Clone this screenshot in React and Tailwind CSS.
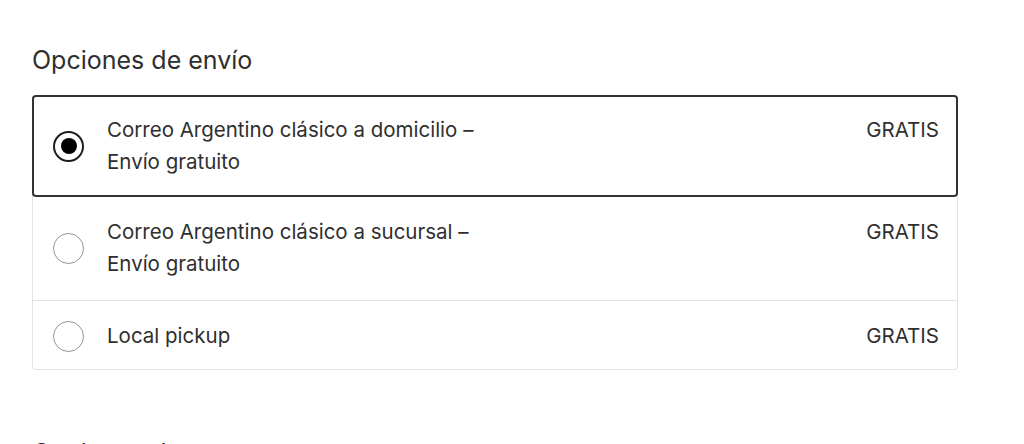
const options = [
  { id: "domicilio", label: "Correo Argentino clásico a domicilio –", sub: "Envío gratuito", price: "GRATIS" },
  { id: "sucursal", label: "Correo Argentino clásico a sucursal –", sub: "Envío gratuito", price: "GRATIS" },
  { id: "pickup", label: "Local pickup", price: "GRATIS" },
];

function Radio({ checked }) {
  if (checked) {
    return (
      <span className="flex h-[31px] w-[31px] shrink-0 items-center justify-center rounded-full border-2 border-[#1e1e1e]">
        <span className="h-4 w-4 rounded-full bg-black" />
      </span>
    );
  }
  return <span className="h-[31px] w-[31px] shrink-0 rounded-full border border-[#949494]" />;
}

// padding per row is tuned so text sits where the reference has it
function Row({ opt, checked, className }) {
  return (
    <label className={"flex items-start " + className}>
      <span className={opt.sub ? "flex h-[64px] items-center" : "flex h-[32px] items-center"}>
        <Radio checked={checked} />
      </span>
      <span className="ml-[23px] flex-1 text-[#2f2f2f]">
        <span className="block">{opt.label}</span>
        {opt.sub && <span className="block">{opt.sub}</span>}
      </span>
      <span className="text-[#2f2f2f]">{opt.price}</span>
    </label>
  );
}

export default function App() {
  const selected = "domicilio";
  return (
    <div className="h-[444px] overflow-hidden bg-white px-8 pt-[42px] font-['Inter',sans-serif] text-[20.5px] leading-[32px]">
      <div className="w-[926px]">
        <h2 className="mb-[17px] text-[25px] leading-[36px] text-[#2f2f2f]">Opciones de envío</h2>
        <div className="rounded-[4px] border border-[#e2e2e2]">
          <div className="-mx-px -mt-px">
            <Row
              opt={options[0]}
              checked={selected === "domicilio"}
              className="rounded-[4px] border-2 border-[#333] pt-[17px] pb-[17px] pl-[19px] pr-[17px]"
            />
          </div>
          <Row
            opt={options[1]}
            checked={selected === "sucursal"}
            className="border-b border-[#e2e2e2] pt-[19px] pb-5 pl-5 pr-[18px]"
          />
          <Row opt={options[2]} checked={selected === "pickup"} className="pt-[19px] pb-[17px] pl-5 pr-[18px]" />
        </div>
        <h2 className="mt-[65px] text-[25px] leading-[36px] text-[#2f2f2f]">Opciones de pago</h2>
      </div>
    </div>
  );
}
